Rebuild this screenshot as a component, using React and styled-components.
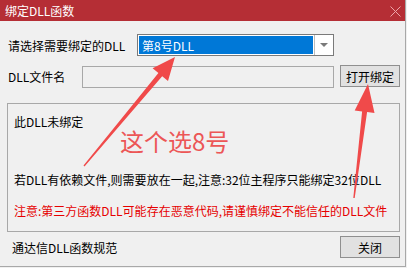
import React from 'react';
import styled, { createGlobalStyle } from 'styled-components';

const GlobalStyle = createGlobalStyle`
    html, body {
        margin: 0;
        padding: 0;
        background: #f0f0f0;
    }
    body {
        font-family: "Noto Sans CJK SC", "Noto Sans", sans-serif;
        font-size: 12px;
        color: #000;
    }
`;

const Window = styled.div`
    position: relative;
    box-sizing: border-box;
    width: 406px;
    height: 267px;
    background: #f0f0f0;
    border-right: 1px solid #a8a8a8;
    border-bottom: 1px solid #a8a8a8;
    display: flex;
    flex-direction: column;
    overflow: hidden;
`;

const TitleBar = styled.div`
    height: 21px;
    flex: none;
    background: #b52e35;
    color: #fff;
    display: flex;
    align-items: center;
    justify-content: space-between;
    padding: 0 4px 0 5px;
    font-size: 12px;
`;

const CloseIcon = styled.svg`
    width: 11px;
    height: 11px;
    margin-top: 1px;
`;

const Body = styled.div`
    flex: 1;
    display: flex;
    flex-direction: column;
    padding: 13px 5px 0 7px;
`;

const Row = styled.div`
    display: flex;
    align-items: center;
    height: 22px;
    margin-top: ${p => p.$top || 0}px;
`;

const Label = styled.div`
    width: ${p => p.$width}px;
    flex: none;
    padding-left: 1px;
    white-space: nowrap;
`;

const Combo = styled.div`
    box-sizing: border-box;
    width: 197px;
    height: 22px;
    border: 1px solid #7a7a7a;
    background: #fff;
    display: flex;
`;

const ComboValue = styled.div`
    flex: 1;
    margin: 1px;
    background: #0078d7;
    color: #fff;
    display: flex;
    align-items: center;
    padding-left: 3px;
`;

const ComboButton = styled.div`
    width: 18px;
    flex: none;
    border-left: 1px solid #bdbdbd;
    display: flex;
    align-items: center;
    justify-content: center;
    &::after {
        content: '';
        border-left: 4px solid transparent;
        border-right: 4px solid transparent;
        border-top: 4px solid #7a7a7a;
    }
`;

const TextInput = styled.div`
    box-sizing: border-box;
    width: 253px;
    height: 22px;
    margin-top: 2px;
    border: 1px solid #a8a8a8;
    background: #f0f0f0;
`;

const Button = styled.div`
    box-sizing: border-box;
    width: 60px;
    height: 22px;
    margin-left: ${p => p.$gap || 0}px;
    border: 1px solid #8f8f8f;
    background: #e1e1e1;
    display: flex;
    align-items: center;
    justify-content: center;
    flex: none;
`;

const Panel = styled.div`
    box-sizing: border-box;
    width: 393px;
    height: 129px;
    margin-top: 16px;
    border: 1px solid #a8a8a8;
    padding: 10px 6px 0 6px;
    display: flex;
    flex-direction: column;
`;

const Line = styled.div`
    line-height: 16px;
    white-space: nowrap;
    margin-top: ${p => p.$top || 0}px;
    color: ${p => (p.$warn ? '#e60000' : '#000')};
`;

const Annotation = styled.div`
    font-size: 24px;
    line-height: 24px;
    color: #ec5656;
    margin: -1px 0 0 106px;
`;

const Footer = styled.div`
    display: flex;
    align-items: center;
    justify-content: space-between;
    margin-top: 4px;
    height: 22px;
`;

const FooterText = styled.div`
    padding-left: 5px;
`;

const Arrows = styled.svg`
    position: absolute;
    left: 0;
    top: 0;
    width: 407px;
    height: 268px;
    pointer-events: none;
`;

export default function App() {
    return (
        <>
            <GlobalStyle />
            <Window>
                <TitleBar>
                    <span>绑定DLL函数</span>
                    <CloseIcon viewBox="0 0 11 11">
                        <path d="M0.5 0.5 L10.5 10.5 M10.5 0.5 L0.5 10.5" stroke="#eda4a8" strokeWidth="1" />
                    </CloseIcon>
                </TitleBar>
                <Body>
                    <Row>
                        <Label $width={129}>请选择需要绑定的DLL</Label>
                        <Combo>
                            <ComboValue>第8号DLL</ComboValue>
                            <ComboButton />
                        </Combo>
                    </Row>
                    <Row $top={9}>
                        <Label $width={74}>DLL文件名</Label>
                        <TextInput />
                        <Button $gap={6}>打开绑定</Button>
                    </Row>
                    <Panel>
                        <Line>此DLL未绑定</Line>
                        <Annotation>这个选8号</Annotation>
                        <Line $top={19}>若DLL有依赖文件,则需要放在一起,注意:32位主程序只能绑定32位DLL</Line>
                        <Line $top={15} $warn>注意:第三方函数DLL可能存在恶意代码,请谨慎绑定不能信任的DLL文件</Line>
                    </Panel>
                    <Footer>
                        <FooterText>通达信DLL函数规范</FooterText>
                        <Button>关闭</Button>
                    </Footer>
                </Body>
                <Arrows viewBox="0 0 407 268">
                    <polygon
                        fill="#f04a4a"
                        points="83.5,165.6 158.4,73.1 152.6,68.3 175,57 168,81.1 162.2,76.3 84.5,166.4"
                    />
                    <polygon
                        fill="#f04a4a"
                        points="353.3,197.9 362.1,111.5 354.7,110.6 368,84 374.5,113 367.1,112.1 354.7,198.1"
                    />
                </Arrows>
            </Window>
        </>
    );
}
